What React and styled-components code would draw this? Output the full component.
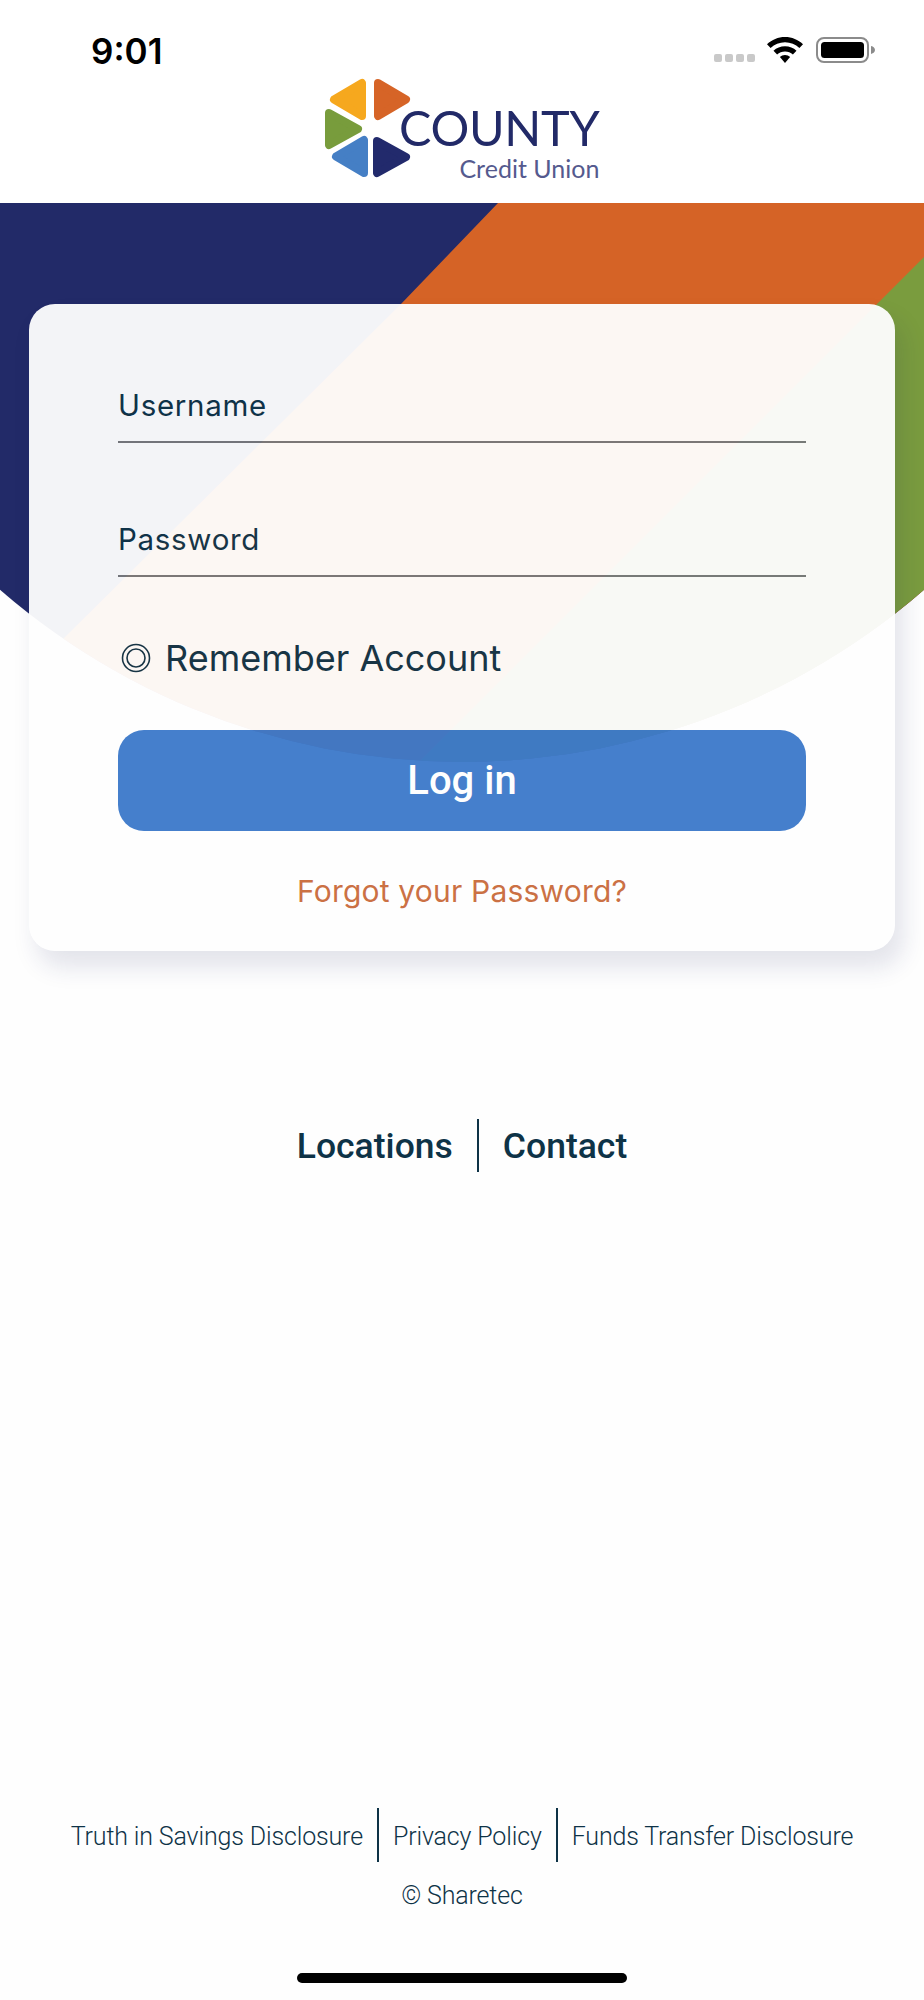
import React from "react";
import styled, { createGlobalStyle } from "styled-components";

const GlobalStyle = createGlobalStyle`
  html, body {
    margin: 0;
    padding: 0;
    background: #fefefe;
  }
`;

const Page = styled.div`
  position: relative;
  width: 924px;
  height: 2000px;
  overflow: hidden;
  display: flex;
  flex-direction: column;
  font-family: "Inter", "Liberation Sans", sans-serif;
  color: #0e3347;
`;

const Header = styled.header`
  height: 203px;
  background: #fff;
  flex: none;
`;

const StatusBar = styled.div`
  height: 72px;
  padding: 29px 48px 0 91px;
  box-sizing: border-box;
  display: flex;
  justify-content: space-between;
  align-items: flex-start;
`;

const Time = styled.div`
  font-size: 35px;
  line-height: 44px;
  font-weight: 600;
  color: #000;
`;

const StatusIcons = styled.div`
  display: flex;
  align-items: center;
  margin-top: 8px;
`;

const Logo = styled.div`
  display: flex;
  padding-left: 320px;
`;

const MarkSvg = styled.svg`
  flex: none;
`;

const LogoWords = styled.div`
  display: flex;
  flex-direction: column;
  align-items: flex-end;
  margin-left: -17px;
  padding-top: 31px;
  color: #222a68;
  font-family: "Lato", sans-serif;
`;

const County = styled.div`
  font-size: 48.5px;
  line-height: 48px;
  letter-spacing: -0.3px;
`;

const CreditUnion = styled.div`
  font-size: 25px;
  line-height: 30px;
  color: #555a8e;
  margin-top: 2px;
`;

const Backdrop = styled.svg`
  position: absolute;
  left: 0;
  top: 203px;
`;

const Card = styled.section`
  position: relative;
  margin: 101px 29px 0;
  height: 647px;
  padding: 83px 89px 0;
  box-sizing: border-box;
  background: #fff;
  opacity: 0.95;
  border-radius: 26px;
  box-shadow: 8px 16px 24px rgba(34, 42, 104, 0.13);
  display: flex;
  flex-direction: column;
`;

const Field = styled.div`
  height: 54px;
  border-bottom: 2px solid #77797b;
  margin-bottom: 78px;
  font-size: 29.5px;
  line-height: 36px;
  letter-spacing: 0.7px;
`;

const Remember = styled.div`
  display: flex;
  align-items: center;
  gap: 14px;
  margin-top: -20px;
  padding-left: 3px;
  font-size: 36px;
  line-height: 46px;
`;

const LoginButton = styled.button`
  margin-top: 49px;
  height: 101px;
  border: 0;
  border-radius: 26px;
  background: #3c79ca;
  color: #fff;
  font-family: "Roboto", sans-serif;
  font-size: 40px;
  font-weight: 500;
`;

const Forgot = styled.a`
  margin-top: 42px;
  text-align: center;
  font-size: 30px;
  line-height: 36px;
  letter-spacing: 0.2px;
  color: #c96a3b;
`;

const QuickLinks = styled.nav`
  margin-top: 168px;
  display: flex;
  justify-content: center;
  font-family: "Roboto", sans-serif;
  font-size: 35.5px;
  font-weight: 500;
  line-height: 51px;
`;

const QuickLink = styled.a`
  padding: 2px 24px 0;
  & + & {
    border-left: 2px solid #0e3347;
    padding-left: 24px;
  }
`;

const Footer = styled.footer`
  margin-top: auto;
  display: flex;
  flex-direction: column;
  align-items: center;
  font-family: "Roboto", sans-serif;
  font-weight: 300;
  font-size: 25px;
  letter-spacing: -0.15px;
`;

const LegalLinks = styled.div`
  display: flex;
  line-height: 50px;
`;

const LegalLink = styled.a`
  padding: 4px 14px 0;
  & + & {
    border-left: 2px solid #0e3347;
  }
`;

const Copyright = styled.div`
  margin-top: 18px;
  line-height: 32px;
`;

const HomeBar = styled.div`
  width: 330px;
  height: 10px;
  margin: 61px 0 17px;
  border-radius: 5px;
  background: #000;
`;

const SignalDots = () => (
  <svg width="41" height="26" viewBox="0 0 41 26" style={{ marginRight: 12 }}>
    {[0, 11, 22, 33].map((x) => (
      <rect key={x} x={x} y="17" width="8" height="8" rx="2" fill="#c9c9c9" />
    ))}
  </svg>
);

const Wifi = () => (
  <svg width="36" height="26" viewBox="0 0 36 26" style={{ marginRight: 13 }}>
    <path d="M18 0C11 0 5 2.700 0 7.200l3.600 3.800C7.500 7.400 12.500 5.300 18 5.300s10.500 2.100 14.400 5.700L36 7.200C31 2.700 25 0 18 0z" />
    <path d="M18 9.200c-4.500 0-8.500 1.700-11.500 4.500l3.600 3.800c2.100-1.900 4.900-3.100 7.900-3.100s5.800 1.200 7.900 3.100l3.600-3.800C26.500 10.900 22.500 9.200 18 9.200z" />
    <path d="M18 18c-2 0-3.800.8-5.100 2L18 26l5.100-6c-1.300-1.200-3.100-2-5.100-2z" />
  </svg>
);

const Battery = () => (
  <svg width="60" height="26" viewBox="0 0 60 26">
    <rect x="1" y="1" width="51" height="24" rx="7" fill="none" stroke="#8b8b8b" strokeWidth="2" />
    <rect x="5" y="5" width="43" height="16" rx="3.500" fill="#000" />
    <path d="M55 9c2.500.6 4 2.200 4 4s-1.500 3.400-4 4z" fill="#8b8b8b" />
  </svg>
);

const LogoMark = () => (
  <MarkSvg width="96" height="110" viewBox="0 0 96 110">
    <g strokeWidth="8" strokeLinejoin="round">
      <polygon points="14,27.500 42,11 42,44" fill="#f6a81e" stroke="#f6a81e" />
      <polygon points="58,11 86,27.500 58,44" fill="#d66427" stroke="#d66427" />
      <polygon points="9,41 38,57 9,73" fill="#789c3c" stroke="#789c3c" />
      <polygon points="44,68 44,101 16,84.500" fill="#457fc5" stroke="#457fc5" />
      <polygon points="57,69 86,85 57,101" fill="#222a6c" stroke="#222a6c" />
    </g>
  </MarkSvg>
);

const RadioIcon = () => (
  <svg width="30" height="30" viewBox="0 0 30 30" fill="none" stroke="#0e3347" strokeWidth="1.600">
    <circle cx="15" cy="15" r="13.500" />
    <circle cx="15" cy="15" r="9" />
  </svg>
);

export default function App() {
  return (
    <Page>
      <GlobalStyle />
      <Header>
        <StatusBar>
          <Time>9:01</Time>
          <StatusIcons>
            <SignalDots />
            <Wifi />
            <Battery />
          </StatusIcons>
        </StatusBar>
        <Logo>
          <LogoMark />
          <LogoWords>
            <County>COUNTY</County>
            <CreditUnion>Credit Union</CreditUnion>
          </LogoWords>
        </Logo>
      </Header>

      <Backdrop width="924" height="570" viewBox="0 203 924 570">
        <defs>
          <clipPath id="dome">
            <circle cx="462" cy="56" r="706" />
          </clipPath>
        </defs>
        <g clipPath="url(#dome)">
          <rect x="0" y="203" width="924" height="570" fill="#222a68" />
          <polygon points="498,203 924,203 924,773 -72,773 401,304" fill="#d56326" />
          <polygon points="924,257 924,773 408,773" fill="#7a9c3e" />
        </g>
      </Backdrop>

      <Card>
        <Field>Username</Field>
        <Field>Password</Field>
        <Remember>
          <RadioIcon />
          Remember Account
        </Remember>
        <LoginButton>Log in</LoginButton>
        <Forgot>Forgot your Password?</Forgot>
      </Card>

      <QuickLinks>
        <QuickLink>Locations</QuickLink>
        <QuickLink>Contact</QuickLink>
      </QuickLinks>

      <Footer>
        <LegalLinks>
          <LegalLink>Truth in Savings Disclosure</LegalLink>
          <LegalLink>Privacy Policy</LegalLink>
          <LegalLink>Funds Transfer Disclosure</LegalLink>
        </LegalLinks>
        <Copyright>© Sharetec</Copyright>
        <HomeBar />
      </Footer>
    </Page>
  );
}
